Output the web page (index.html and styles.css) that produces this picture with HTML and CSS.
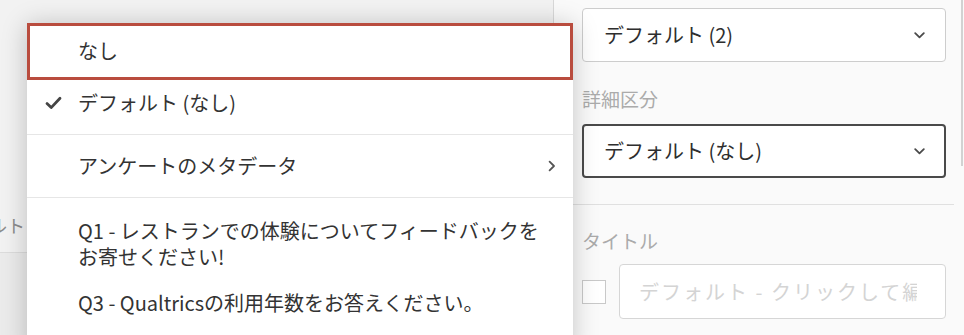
FILE: index.html
```html
<!DOCTYPE html>
<html lang="ja">
<head>
<meta charset="utf-8">
<title>Menu</title>
<link rel="stylesheet" href="styles.css">
</head>
<body>
<div class="app">
  <main class="canvas">
    <div class="canvas-top"></div>
    <div class="canvas-row">
      <div class="cell-label"><span>デフォルト</span></div>
    </div>
    <div class="canvas-rest"></div>
  </main>

  <aside class="panel">
    <div class="select">
      <span class="select-value">デフォルト (2)</span>
      <svg class="select-caret" width="11" height="7" viewBox="0 0 11 7"><path d="M1.2 1.2 L5.5 5.4 L9.8 1.2" fill="none" stroke="#4a4a4a" stroke-width="1.8" stroke-linecap="round" stroke-linejoin="round"/></svg>
    </div>
    <div class="field-label">詳細区分</div>
    <div class="select select-active">
      <span class="select-value">デフォルト (なし)</span>
      <svg class="select-caret" width="11" height="7" viewBox="0 0 11 7"><path d="M1.2 1.2 L5.5 5.4 L9.8 1.2" fill="none" stroke="#4a4a4a" stroke-width="1.8" stroke-linecap="round" stroke-linejoin="round"/></svg>
    </div>
    <div class="panel-divider"></div>
    <div class="field-label title-label">タイトル</div>
    <div class="title-row">
      <span class="checkbox"></span>
      <div class="text-input"><div class="placeholder">デフォルト - クリックして編集</div></div>
    </div>
  </aside>

  <div class="scrollbar"></div>

  <div class="menu">
    <div class="menu-group first">
      <div class="menu-item highlighted">
        <span class="icon-slot"></span>
        <span class="item-text">なし</span>
      </div>
      <div class="menu-item">
        <span class="icon-slot">
          <svg width="17" height="14" viewBox="0 0 17 14"><path d="M2 7.6 L6.2 11.6 L15 2.2" fill="none" stroke="#444" stroke-width="2.8" stroke-linecap="round" stroke-linejoin="round"/></svg>
        </span>
        <span class="item-text">デフォルト (なし)</span>
      </div>
    </div>
    <div class="menu-group">
      <div class="menu-item">
        <span class="icon-slot"></span>
        <span class="item-text">アンケートのメタデータ</span>
        <svg class="submenu-arrow" width="8" height="12" viewBox="0 0 8 12"><path d="M1.6 1.6 L6 6 L1.6 10.4" fill="none" stroke="#555" stroke-width="1.8" stroke-linecap="round" stroke-linejoin="round"/></svg>
      </div>
    </div>
    <div class="menu-group">
      <div class="menu-item">
        <span class="icon-slot"></span>
        <span class="item-text">Q1 - レストランでの体験についてフィードバックを<br>お寄せください!</span>
      </div>
      <div class="menu-item">
        <span class="icon-slot"></span>
        <span class="item-text">Q3 - Qualtricsの利用年数をお答えください。</span>
      </div>
    </div>
  </div>
</div>
</body>
</html>
```

FILE: styles.css
```css
* { box-sizing: border-box; }

html, body {
  margin: 0;
  padding: 0;
}

body {
  width: 964px;
  height: 335px;
  overflow: hidden;
  background: #f4f4f4;
  font-family: "Noto Sans CJK JP", "Noto Sans", sans-serif;
  color: #333;
}

.app {
  position: relative;
  display: flex;
  width: 964px;
  height: 335px;
  overflow: hidden;
}

/* ---------- left canvas ---------- */
.canvas {
  width: 553px;
  flex: none;
  display: flex;
  flex-direction: column;
  background: #f2f2f2;
}

.canvas-top {
  height: 198px;
  flex: none;
}

.canvas-row {
  height: 55px;
  flex: none;
  display: flex;
  align-items: center;
  border-bottom: 1px solid #dcdcdc;
}

.cell-label {
  width: 25px;
  display: flex;
  justify-content: flex-end;
  white-space: nowrap;
  font-size: 18px;
  line-height: 24px;
  color: #8c8c8c;
}

.canvas-rest {
  flex: 1;
  background: #ebebeb;
}

/* ---------- right panel ---------- */
.panel {
  flex: 1;
  min-width: 0;
  border-left: 1px solid #d8d8d8;
  background: #fafafa;
  padding: 8px 18px 0 28px;
  display: flex;
  flex-direction: column;
}

.select {
  height: 54px;
  flex: none;
  display: flex;
  align-items: center;
  justify-content: space-between;
  padding: 0 20px 0 21px;
  border: 1px solid #cdcdcd;
  border-radius: 4px;
  background: #fff;
  font-size: 20px;
  line-height: 26px;
  color: #2e2e2e;
}

.select-active {
  border: 2px solid #4a4a4a;
  padding: 0 19px 0 20px;
}

.select-caret { flex: none; }

.field-label {
  margin: 24px 0 12px;
  font-size: 19px;
  line-height: 26px;
  color: #ababab;
}

.panel-divider {
  height: 1px;
  flex: none;
  background: #e0e0e0;
  margin: 26px -8px 0 -28px;
}

.title-label {
  margin: 23px 0 10px;
}

.title-row {
  display: flex;
  align-items: center;
  gap: 13px;
  min-width: 0;
}

.checkbox {
  width: 24px;
  height: 24px;
  flex: none;
  border: 1px solid #c9c9c9;
  background: #fff;
}

.text-input {
  flex: 1 1 0;
  width: 0;
  min-width: 0;
  height: 55px;
  display: flex;
  align-items: center;
  padding: 0 28px 0 19px;
  border: 1px solid #d6d6d6;
  border-radius: 4px;
  background: #fff;
}

.placeholder {
  flex: 1;
  min-width: 0;
  overflow: hidden;
  white-space: nowrap;
  font-size: 20px;
  line-height: 26px;
  letter-spacing: 2px;
  color: #d4d4d4;
}

.scrollbar {
  position: absolute;
  top: 0;
  right: 1px;
  width: 2px;
  height: 166px;
  background: #d2d2d2;
}

/* ---------- dropdown menu (overlay) ---------- */
.menu {
  position: absolute;
  left: 27px;
  top: 23px;
  width: 546px;
  height: 330px;
  background: #fff;
  box-shadow: 0 2px 24px rgba(0, 0, 0, 0.22);
}

.menu-group {
  padding: 8px 0;
  border-top: 1px solid #e6e6e6;
}

.menu-group.first {
  padding-top: 0;
  border-top: none;
}

.menu-group:last-child {
  padding-top: 10px;
}

.menu-item {
  display: flex;
  align-items: center;
  padding: 10px 17px 10px 18px;
  font-size: 20px;
  line-height: 26px;
  color: #333;
}

.menu-item.highlighted {
  border: 3px solid #b94c3e;
  padding: 12px 14px 13px 15px;
}

.icon-slot {
  width: 17px;
  height: 26px;
  flex: none;
  margin-right: 16px;
  display: flex;
  align-items: center;
}

.item-text {
  flex: 1;
}

.submenu-arrow {
  flex: none;
}
```
